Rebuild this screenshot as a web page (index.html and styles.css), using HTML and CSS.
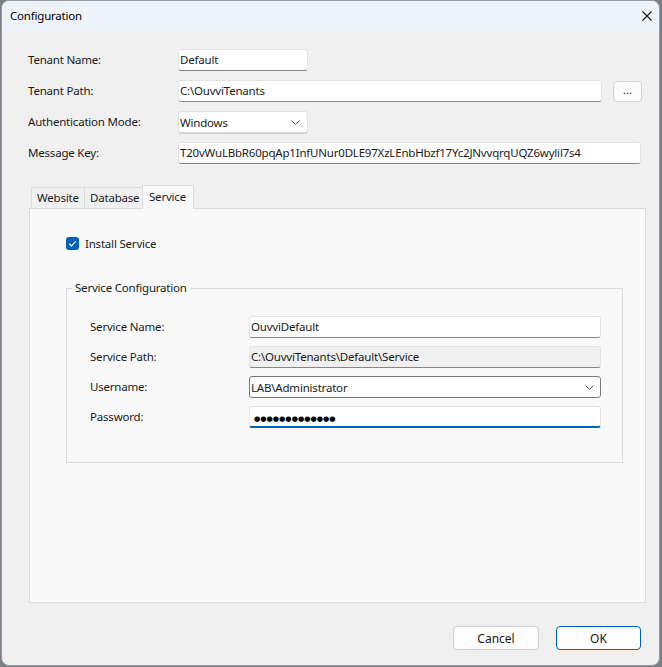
FILE: index.html
```html
<!DOCTYPE html>
<html lang="en">
<head>
<meta charset="utf-8">
<title>Configuration</title>
<link rel="stylesheet" href="styles.css">
</head>
<body>
<div class="window">
  <div class="titlebar">
    <span class="title">Configuration</span>
    <svg class="close" width="10" height="10" viewBox="0 0 10 10"><path d="M0.5 0.5 L9.5 9.5 M9.5 0.5 L0.5 9.5" stroke="#1a1a1a" stroke-width="1.1" fill="none"/></svg>
  </div>
  <div class="content">
    <div class="form">
      <span class="label">Tenant Name:</span>
      <div class="field short">Default</div>
      <span class="label">Tenant Path:</span>
      <div class="path-row">
        <div class="field grow">C:\OuvviTenants</div>
        <button class="browse">...</button>
      </div>
      <span class="label">Authentication Mode:</span>
      <div class="field select short">
        <span>Windows</span>
        <svg class="chevron" width="9" height="5" viewBox="0 0 9 5"><path d="M0.5 0.5 L4.5 4.5 L8.5 0.5" stroke="#555" stroke-width="1" fill="none"/></svg>
      </div>
      <span class="label">Message Key:</span>
      <div class="field key">T20vWuLBbR60pqAp1InfUNur0DLE97XzLEnbHbzf17Yc2JNvvqrqUQZ6wylil7s4</div>
    </div>

    <div class="tabs">
      <div class="tabstrip">
        <div class="tab tab-web">Website</div>
        <div class="tab tab-db">Database</div>
        <div class="tab tab-svc active">Service</div>
      </div>
      <div class="panel">
        <div class="check">
          <span class="box"><svg width="13" height="13" viewBox="0 0 13 13"><path d="M3.2 6.6 L5.4 8.8 L9.8 4.3" stroke="#fff" stroke-width="1.2" fill="none"/></svg></span>
          <span>Install Service</span>
        </div>
        <fieldset class="group">
          <legend>Service Configuration</legend>
          <div class="form2">
            <span class="label">Service Name:</span>
            <div class="field">OuvviDefault</div>
            <span class="label">Service Path:</span>
            <div class="field disabled">C:\OuvviTenants\Default\Service</div>
            <span class="label">Username:</span>
            <div class="field combo">
              <span>LAB\Administrator</span>
              <svg class="chevron" width="9" height="5" viewBox="0 0 9 5"><path d="M0.5 0.5 L4.5 4.5 L8.5 0.5" stroke="#555" stroke-width="1" fill="none"/></svg>
            </div>
            <span class="label">Password:</span>
            <div class="field focused"><span class="dots">●●●●●●●●●●●●●</span></div>
          </div>
        </fieldset>
      </div>
    </div>

    <div class="buttons">
      <button class="btn">Cancel</button>
      <button class="btn primary">OK</button>
    </div>
  </div>
</div>
</body>
</html>
```

FILE: styles.css
```css
* { box-sizing: border-box; }

html, body {
  margin: 0;
  padding: 0;
}

body {
  background: #7a7f88;
  font-family: "Noto Sans", "Open Sans", sans-serif;
  font-size: 11.5px;
  letter-spacing: -0.2px;
  color: #1a1a1a;
  width: 662px;
  height: 667px;
  overflow: hidden;
}

.window {
  margin-left: 1px;
  width: 659px;
  height: 666px;
  border: 1px solid #9a9a9a;
  border-radius: 8px;
  overflow: hidden;
  background: #f0f0f0;
  display: flex;
  flex-direction: column;
}

.titlebar {
  height: 30px;
  flex: none;
  background: #eef2f9;
  display: flex;
  align-items: center;
  justify-content: space-between;
  padding: 0 7px 2px 8px;
}

.title {
  color: #000;
}

.close {
  display: block;
  margin-top: 2px;
}

.content {
  flex: 1;
  padding: 18px 17px 0 26px;
}

.form {
  display: grid;
  grid-template-columns: 150px 1fr;
  grid-auto-rows: 22px;
  row-gap: 9px;
  align-items: center;
}

.label {
  white-space: nowrap;
  line-height: 20px;
  padding-bottom: 1px;
}

.field {
  height: 22px;
  background: #fff;
  border: 1px solid #e3e3e3;
  border-bottom-color: #868686;
  border-radius: 3px;
  padding: 0 2px 0 1px;
  line-height: 19px;
  white-space: nowrap;
  overflow: hidden;
}

.short { width: 130px; }

.path-row {
  display: flex;
  gap: 11px;
  align-items: center;
}

.grow { flex: 1; }

.browse {
  width: 29px;
  height: 21px;
  border: 1px solid #d2d2d2;
  border-radius: 4px;
  background: #fbfbfb;
  font-family: inherit;
  font-size: 11px;
  line-height: 14px;
  padding: 0 0 3px;
  color: #1a1a1a;
}

.select {
  display: flex;
  align-items: center;
  justify-content: space-between;
  border-bottom-color: #d8d8d8;
  padding-right: 7px;
  box-shadow: 0 1px 0 #cfcfcf;
}

.key {
  width: 463px;
}

.tabs {
  margin: 21px -4px 0 1px;
}

.tabstrip {
  display: flex;
  align-items: flex-end;
  height: 23px;
  padding-left: 2px;
  position: relative;
  z-index: 1;
}

.tab {
  height: 21px;
  border: 1px solid #dcdcdc;
  border-bottom: none;
  background: #f0f0f0;
  line-height: 20px;
  padding-left: 5px;
}

.tab-web { width: 54px; }
.tab-db { width: 59px; margin-left: -1px; }
.tab-svc { width: 52px; margin-left: -1px; }

.tab.active {
  height: 24px;
  margin-bottom: -1px;
  background: #f9f9f9;
  line-height: 22px;
  padding-left: 6px;
}

.panel {
  height: 395px;
  background: #f9f9f9;
  border: 1px solid #dcdcdc;
  padding: 28px 22px 0 36px;
}

.check {
  display: flex;
  align-items: center;
  gap: 6px;
  height: 13px;
}

.box {
  width: 13px;
  height: 13px;
  border-radius: 3px;
  background: #005fb8;
  display: block;
}

.box svg { display: block; }

.group {
  margin: 30px 0 0;
  padding: 0 0 34px;
  border: 1px solid #dcdcdc;
  min-width: 0;
}

.group legend {
  margin-left: 5px;
  padding: 0 3px;
  line-height: 16px;
}

.form2 {
  display: grid;
  grid-template-columns: 159px 352px;
  grid-auto-rows: 22px;
  row-gap: 8px;
  align-items: center;
  margin: 20px 0 0 23px;
}

.disabled {
  background: #f0f0f0;
}

.combo {
  display: flex;
  align-items: center;
  justify-content: space-between;
  border-color: #7a7a7a;
  padding-right: 6px;
}

.focused {
  border-bottom: 2px solid #005fb8;
}

.dots {
  font-family: "DejaVu Sans", sans-serif;
  font-size: 7.2px;
  letter-spacing: 0;
  padding-left: 3px;
  color: #000;
}

.buttons {
  display: flex;
  justify-content: flex-end;
  gap: 17px;
  margin-top: 23px;
  padding-right: 1px;
}

.btn {
  width: 86px;
  height: 24px;
  border: 1px solid #d0d0d0;
  border-radius: 4px;
  background: #fdfdfd;
  font-family: inherit;
  font-size: 12px;
  letter-spacing: 0;
  color: #1a1a1a;
  padding: 0;
}

.btn.primary {
  width: 85px;
  border-color: #005fb8;
}
```
